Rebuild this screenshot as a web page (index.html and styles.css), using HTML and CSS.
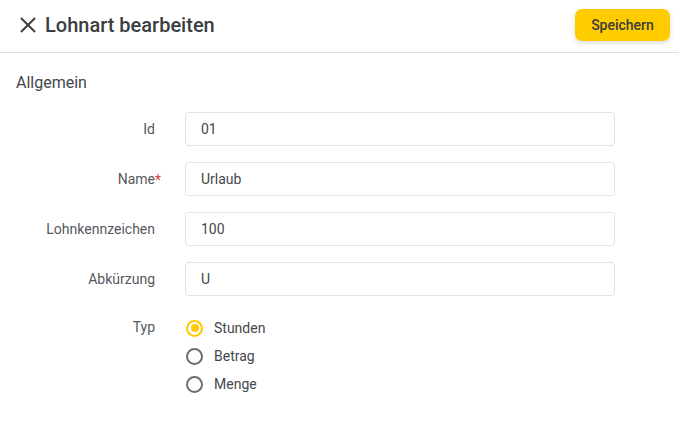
FILE: index.html
```html
<!DOCTYPE html>
<html lang="de">
<head>
<meta charset="utf-8">
<link rel="stylesheet" href="styles.css">
</head>
<body>
<header class="header">
  <div class="title-wrap">
    <svg class="close" width="24" height="24" viewBox="0 0 24 24"><path d="M5.7 5.7 L18.3 18.3 M18.3 5.7 L5.7 18.3" stroke="#3c3f44" stroke-width="2" fill="none" stroke-linecap="square"/></svg>
    <h1 class="title">Lohnart bearbeiten</h1>
  </div>
  <button class="save">Speichern</button>
</header>
<main class="content">
  <h2 class="section">Allgemein</h2>
  <div class="form">
    <label class="label">Id</label>
    <div class="input">01</div>
    <label class="label"><span class="req">Name</span></label>
    <div class="input">Urlaub</div>
    <label class="label">Lohnkennzeichen</label>
    <div class="input">100</div>
    <label class="label">Abkürzung</label>
    <div class="input">U</div>
    <label class="label label-top">Typ</label>
    <div class="radios">
      <div class="radio-row"><span class="radio checked"></span><span>Stunden</span></div>
      <div class="radio-row"><span class="radio"></span><span>Betrag</span></div>
      <div class="radio-row"><span class="radio"></span><span>Menge</span></div>
    </div>
  </div>
</main>
</body>
</html>
```
FILE: styles.css
```css
* { box-sizing: border-box; }
html, body { margin: 0; padding: 0; background: #fff; }
body { font-family: Roboto, "Noto Sans", sans-serif; color: #3c3f44; width: 679px; height: 427px; overflow: hidden; }
.header { height: 53px; border-bottom: 1px solid #dcdde2; display: flex; align-items: flex-start; justify-content: space-between; padding: 0 9px 0 16px; }
.title-wrap { display: flex; align-items: center; gap: 5px; height: 50px; }
.close { display: block; }
.title { margin: 0; font-size: 20px; font-weight: 500; color: #3a3d42; line-height: 24px; }
.save { margin-top: 9px; width: 95px; height: 32px; border: none; border-radius: 7px; background: #ffcc00; color: #3b3b3b; font-family: Roboto, sans-serif; font-size: 14px; font-weight: 500; box-shadow: 0 2px 5px rgba(0,0,0,0.14); padding: 0; }
.content { padding: 20px 0 0 0; }
.section { margin: 0 0 19px 16px; font-size: 16px; font-weight: 400; color: #44474c; line-height: 20px; }
.form { display: grid; grid-template-columns: 155px 430px; column-gap: 30px; row-gap: 16px; align-items: center; }
.label { text-align: right; font-size: 14px; color: #55585d; line-height: 20px; }
.req { position: relative; }
.req::after { content: "*"; position: absolute; left: 100%; top: -1px; color: #e53935; }
.label-top { align-self: start; margin-top: 5px; }
.input { height: 34px; border: 1px solid #e3e3e3; border-radius: 4px; padding: 0 15px; font-size: 14px; color: #44474c; display: flex; align-items: center; }
.radios { display: flex; flex-direction: column; padding-top: 2px; margin-left: 1px; }
.radio-row { height: 28px; display: flex; align-items: center; gap: 11px; font-size: 14px; color: #44474c; }
.radio { width: 17px; height: 17px; border: 2px solid #6b6e72; border-radius: 50%; position: relative; flex: none; }
.radio.checked { border-color: #ffc800; }
.radio.checked::after { content: ""; position: absolute; left: 2.5px; top: 2.5px; width: 8px; height: 8px; border-radius: 50%; background: #ffc800; }
```
